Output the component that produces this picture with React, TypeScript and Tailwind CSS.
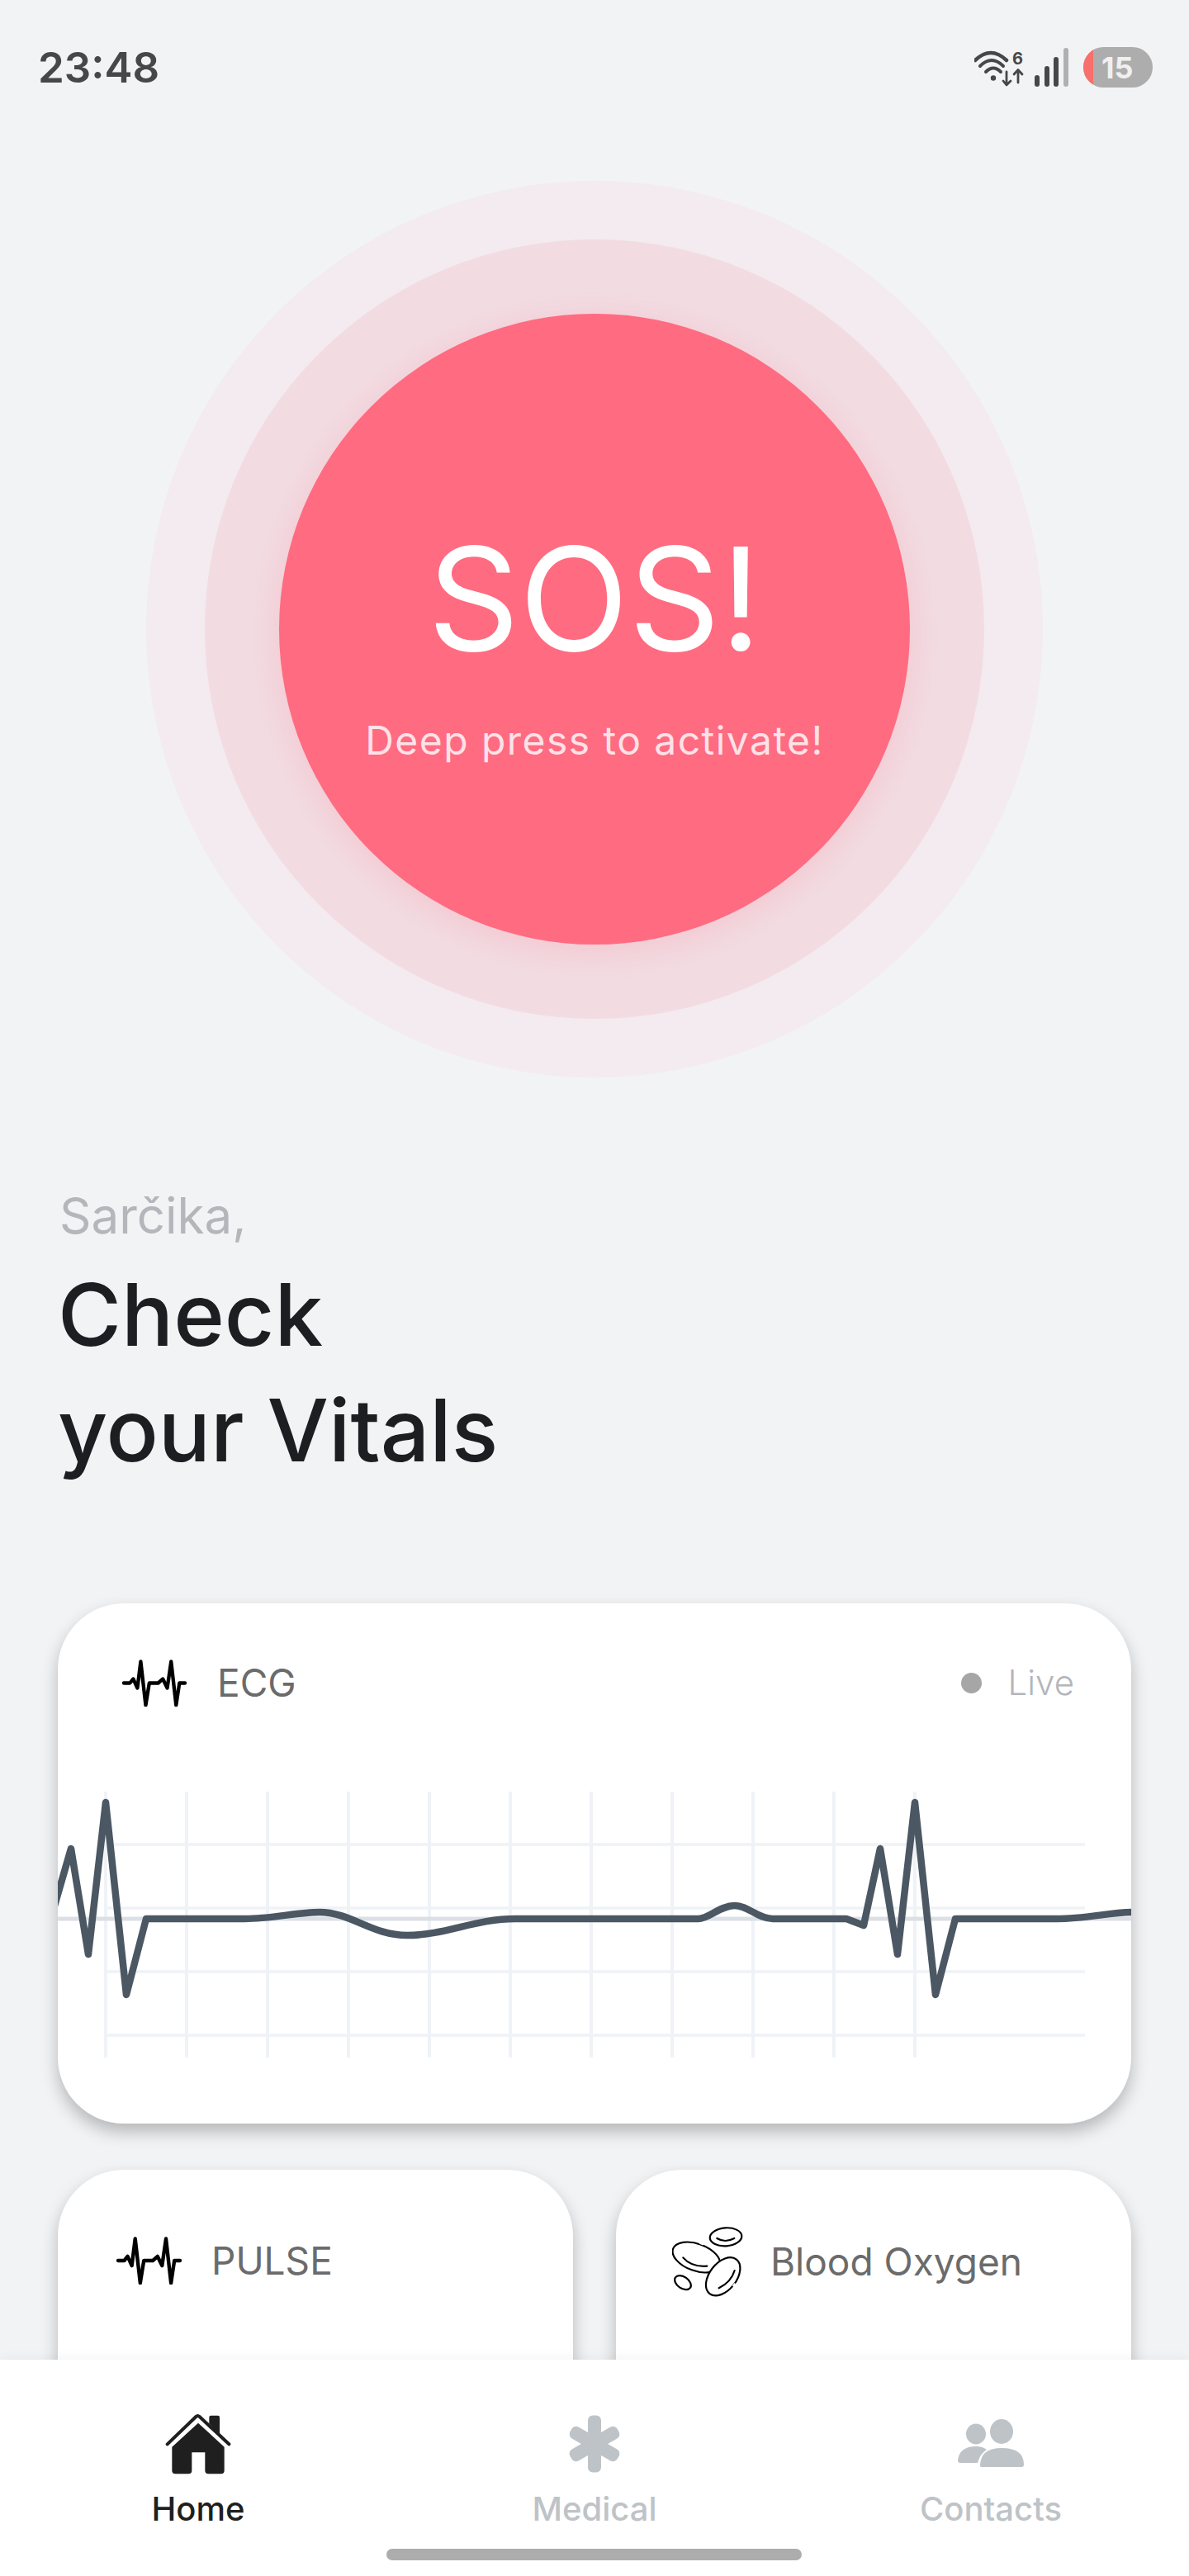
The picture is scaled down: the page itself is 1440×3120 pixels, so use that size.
import React from "react";

const INTER = "font-['Inter',sans-serif]";

function Ecg({ className }: { className: string }) {
  return (
    <svg viewBox="85 55 233 170" className={className} fill="none" stroke="#000" strokeWidth="13" strokeLinejoin="round" strokeLinecap="round">
      <polyline points="91,140 113,140 125,125 140,158 152,62 170,220 183,140 215,140 232,125 248,158 262,62 280,220 292,140 312,140" />
    </svg>
  );
}

function Blood() {
  return (
    <svg viewBox="70 72 258 258" className="w-[86px] h-[86px] shrink-0" fill="none" stroke="#000" strokeWidth="6.5" strokeLinecap="round">
      <ellipse cx="265" cy="112" rx="58" ry="33" transform="rotate(-4 265 112)" />
      <path d="M233 117 Q262 135 296 117" />
      <ellipse cx="158" cy="186" rx="90" ry="49" transform="rotate(20 158 186)" />
      <path d="M110 187 Q140 222 197 218" />
      <ellipse cx="255" cy="256" rx="49" ry="79" transform="rotate(38 255 256)" fill="#fff" />
      <path d="M240 298 Q285 275 297 234" />
      <ellipse cx="109" cy="278" rx="33" ry="21" transform="rotate(35 109 278)" />
      <path d="M170 132 L184 138" stroke="#fff" strokeWidth="9" strokeLinecap="butt" />
      <path d="M300 282 L292 292" stroke="#fff" strokeWidth="9" strokeLinecap="butt" />
    </svg>
  );
}

function Chart() {
  const vs = [128, 226, 324, 422, 520, 618, 716, 814, 912, 1010, 1108];
  const hs = [2233, 2310, 2387, 2464];
  return (
    <svg viewBox="70 2160 1300 340" className="block mt-[99px] w-[1300px] h-[340px]" fill="none">
      {vs.map((x) => (
        <line key={x} x1={x} x2={x} y1="2169" y2="2491" stroke="#eff2f6" strokeWidth="4" />
      ))}
      {hs.map((y) => (
        <line key={y} x1="128" x2="1314" y1={y} y2={y} stroke="#eff2f6" strokeWidth="3.5" />
      ))}
      <line x1="70" x2="1370" y1="2323" y2="2323" stroke="#dbe0e6" strokeWidth="5" />
      <path
        d="M58 2335 L86 2238 L107 2366 L128 2182 L153 2415 L177 2323 L296 2323 C330 2323 360 2315 387 2315 C425 2315 450 2343 493 2343 C540 2343 575 2323 624 2323 L846 2323 C858 2323 872 2307 890 2307 C906 2307 918 2323 936 2323 L1025 2323 L1046 2331 L1066 2238 L1087 2366 L1108 2182 L1133 2415 L1157 2323 L1280 2323 C1315 2323 1345 2315 1372 2315"
        stroke="#4b5763"
        strokeWidth="8.5"
        strokeLinejoin="round"
        strokeLinecap="round"
      />
    </svg>
  );
}

function NavItem({ label, active, icon }: { label: string; active?: boolean; icon: React.ReactNode }) {
  return (
    <div className="flex flex-col items-center">
      <div className="h-[75px] flex items-center justify-center">{icon}</div>
      <span className={`mt-[18px] text-[40px] leading-[48px] font-medium ${active ? "text-[#1f1f1f]" : "text-[#bec3c7]"}`}>{label}</span>
    </div>
  );
}

export default function App() {
  return (
    <div className={`relative w-[1440px] h-[3120px] overflow-hidden bg-[#f2f3f5] ${INTER}`}>
      {/* status bar */}
      <div className="h-[160px] flex items-start justify-between pl-[46px] pr-[44px] pt-[52px]">
        <span className="text-[51px] leading-[60px] font-semibold text-[#474747]">23:48</span>
        <div className="flex items-center pt-[5px]">
          <svg viewBox="10 6 64 49" className="w-[64px] h-[49px]" fill="none" stroke="#474747" strokeLinecap="round" strokeLinejoin="round">
            <path d="M11 22 Q30 4 49 22" strokeWidth="4.5" />
            <path d="M17 29 Q31 15 45 29" strokeWidth="4" />
            <path d="M24 36 Q33 27 42 36" strokeWidth="4" />
            <circle cx="33" cy="43.5" r="3.2" fill="#474747" stroke="none" />
            <text x="56" y="27" fill="#474747" stroke="none" fontSize="20" fontWeight="700" fontFamily="Inter">6</text>
            <path d="M49 36 V51 M45 47 L49 52 L54 47" strokeWidth="2.8" />
            <path d="M63 49 V34 M58 39 L63 33.5 L68 39" strokeWidth="2.8" />
          </svg>
          <svg viewBox="0 0 42 48" className="ml-[9px] w-[42px] h-[48px]">
            <rect x="0" y="33" width="6" height="14" rx="3" fill="#474747" />
            <rect x="12" y="22" width="6" height="25" rx="3" fill="#474747" />
            <rect x="23" y="11" width="6" height="36" rx="3" fill="#474747" />
            <rect x="35" y="0" width="6" height="47" rx="3" fill="#b0b0b0" />
          </svg>
          <div className="ml-[17px] w-[84px] h-[49px] rounded-full bg-[#adadad] overflow-hidden flex items-center">
            <div className="w-[12px] h-full bg-[#f7706c] shrink-0" />
            <span className="ml-[10px] text-[36px] leading-none font-bold text-[#f0f0f0]">15</span>
          </div>
        </div>
      </div>

      {/* SOS */}
      <div className="mt-[59px] flex justify-center">
        <div className="w-[1086px] h-[1086px] rounded-full bg-[#f3ebef] flex items-center justify-center">
          <div className="w-[944px] h-[944px] rounded-full bg-[#f2dce2] flex items-center justify-center">
            <div className="w-[764px] h-[764px] rounded-full bg-[#ff6b81] shadow-[0_8px_40px_rgba(255,107,129,0.2)] flex flex-col items-center text-white">
              <span className="mt-[245px] text-[173px] leading-[200px] font-normal">SOS!</span>
              <span className="mt-[42px] text-[48px] leading-[60px] tracking-[1.45px] text-[#fde2e8]">Deep press to activate!</span>
            </div>
          </div>
        </div>
      </div>

      {/* heading */}
      <div className="pl-[70px] mt-[131px]">
        <p className="ml-[2px] text-[60px] leading-[72px] text-[#b3b6bb]">Sarčika,</p>
        <h1 className="mt-[14px] text-[105px] leading-[140px] font-medium text-[#1c1e21]">
          Check
          <br />
          your Vitals
        </h1>
      </div>

      {/* cards */}
      <div className="mx-[70px] mt-[140px] flex flex-col gap-[56px]">
        <div className="h-[630px] rounded-[80px] bg-white overflow-hidden shadow-[0_10px_20px_rgba(0,0,0,0.25)]">
          <div className="h-[48px] mt-[72px] pl-[78px] pr-[69px] flex items-center justify-between">
            <div className="flex items-center gap-[37px]">
              <Ecg className="w-[78px] h-[57px]" />
              <span className="text-[46px] leading-[48px] text-[#6b6b6b]">ECG</span>
            </div>
            <div className="flex items-center gap-[32px]">
              <span className="w-[25px] h-[25px] rounded-full bg-[#a6a6a6]" />
              <span className="text-[42px] leading-[48px] font-light text-[#b3b6bb]">Live</span>
            </div>
          </div>
          <Chart />
        </div>
        <div className="grid grid-cols-2 gap-[52px]">
          <div className="h-[420px] rounded-[80px] bg-white shadow-[0_10px_20px_rgba(0,0,0,0.25)] pl-[71px] pt-[81px]">
            <div className="flex items-center gap-[36px]">
              <Ecg className="w-[79px] h-[58px]" />
              <span className="text-[46px] leading-[58px] text-[#6b6b6b]">PULSE</span>
            </div>
          </div>
          <div className="h-[420px] rounded-[80px] bg-white shadow-[0_10px_20px_rgba(0,0,0,0.25)] pl-[68px] pt-[68px]">
            <div className="flex items-center gap-[33px]">
              <Blood />
              <span className="text-[46px] leading-[58px] text-[#6b6b6b]">Blood Oxygen</span>
            </div>
          </div>
        </div>
      </div>

      {/* bottom nav */}
      <div className="absolute left-0 right-0 bottom-0 h-[262px] bg-white shadow-[0_-4px_12px_rgba(0,0,0,0.04)]">
        <div className="grid grid-cols-3 pt-[64px]">
          <NavItem
            label="Home"
            active
            icon={
              <svg viewBox="240 65 240 228" className="w-[80px] h-[76px]">
                <path d="M400 105 V82 Q400 76 406 76 H432 Q438 76 438 82 V145 Z" fill="#1f1f1f" />
                <path d="M248 180 L352 80 Q358 74 365 80 L472 180" fill="none" stroke="#1f1f1f" strokeWidth="12" strokeLinecap="round" />
                <path d="M360 103 L455 190 V276 Q455 288 443 288 H397 Q385 288 385 276 V210 H337 V276 Q337 288 325 288 H277 Q265 288 265 276 V190 Z" fill="#1f1f1f" />
              </svg>
            }
          />
          <NavItem
            label="Medical"
            icon={
              <svg viewBox="-35 -35 70 70" className="w-[70px] h-[70px]" fill="#bec3c7">
                <rect x="-8" y="-34.5" width="16" height="69" rx="6" />
                <rect x="-8" y="-33" width="16" height="66" rx="6" transform="rotate(60)" />
                <rect x="-8" y="-33" width="16" height="66" rx="6" transform="rotate(120)" />
              </svg>
            }
          />
          <NavItem
            label="Contacts"
            icon={
              <svg viewBox="0 0 80 60" className="w-[80px] h-[60px]" fill="#bec3c7">
                <ellipse cx="22" cy="18" rx="12" ry="12.5" />
                <ellipse cx="53" cy="15" rx="14" ry="15" />
                <path d="M27 57 Q27 35 53 35 Q80 35 80 55 Q80 58 77 58 H30 Q27 58 27 57 Z" />
                <path d="M0 50 Q2 33 22 33 Q30 33 35 37 Q27 42 24 53 H3 Q0 53 0 50 Z" />
              </svg>
            }
          />
        </div>
        <div className="absolute left-[468px] top-[229px] w-[503px] h-[14px] rounded-full bg-[#adadad]" />
      </div>
    </div>
  );
}
